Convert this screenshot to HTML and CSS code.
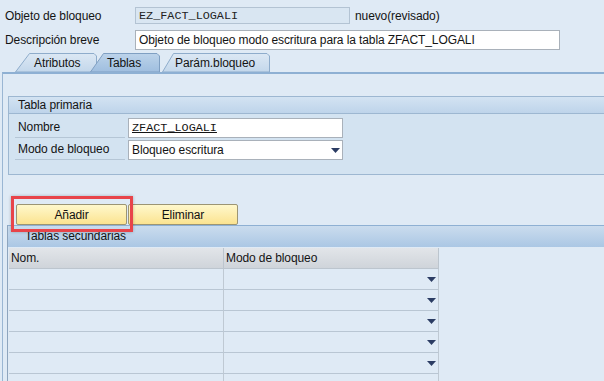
FILE: index.html
```html
<!DOCTYPE html>
<html lang="es">
<head>
  <meta charset="UTF-8">
  <title>Objeto de bloqueo EZ_FACT_LOGALI</title>
  <link rel="stylesheet" href="styles.css">
</head>
<body>
  <!-- cabecera -->
  <div class="header">
    <div class="frow r1">
      <span class="flabel">Objeto de bloqueo</span>
      <span class="field ro mono">EZ_FACT_LOGALI</span>
      <span class="state">nuevo(revisado)</span>
    </div>
    <div class="frow r2">
      <span class="flabel">Descripción breve</span>
      <span class="field desc">Objeto de bloqueo modo escritura para la tabla ZFACT_LOGALI</span>
    </div>
  </div>

  <!-- pestañas -->
  <div class="tabstrip">
    <div class="tab t-attr">
      <svg width="82" height="19"><defs><linearGradient id="gi" x1="0" y1="0" x2="0" y2="1"><stop offset="0" stop-color="#dce8f4"/><stop offset="1" stop-color="#c3d7eb"/></linearGradient></defs><polygon points="0.5,19 14.5,0.5 79,0.5 81.5,3 81.5,19" fill="url(#gi)" stroke="#8eaccb"/></svg>
      <span>Atributos</span>
    </div>
    <div class="tab t-tab active">
      <svg width="70" height="19"><defs><linearGradient id="ga" x1="0" y1="0" x2="0" y2="1"><stop offset="0" stop-color="#bcd3ea"/><stop offset="1" stop-color="#9fbedf"/></linearGradient></defs><polygon points="0.5,19 13.5,0.5 67,0.5 69.5,3 69.5,19" fill="url(#ga)" stroke="#7f9fc2"/></svg>
      <span>Tablas</span>
    </div>
    <div class="tab t-par">
      <svg width="108" height="19"><polygon points="0.5,19 11.5,0.5 105,0.5 107.5,3 107.5,19" fill="url(#gi)" stroke="#8eaccb"/></svg>
      <span>Parám.bloqueo</span>
    </div>
  </div>

  <div class="panel">
    <div class="group">
      <div class="group-title">Tabla primaria</div>
      <div class="group-body">
        <div class="grow">
          <span class="glabel">Nombre</span>
          <span class="field gfield mono"><u>ZFACT_LOGALI</u></span>
        </div>
        <div class="grow">
          <span class="glabel">Modo de bloqueo</span>
          <span class="field gfield select">Bloqueo escritura
            <svg class="arrow" width="9" height="5"><polygon points="0,0 9,0 4.5,5" fill="#2b3c63"/></svg>
          </span>
        </div>
      </div>
    </div>

    <div class="btnrow">
      <button class="btn b-add">Añadir</button>
      <button class="btn b-del">Eliminar</button>
      <div class="mark"></div>
    </div>

    <div class="tbl">
      <div class="tbl-title">Tablas secundarias</div>
      <div class="tbl-grid">
        <div class="th">Nom.</div><div class="th">Modo de bloqueo</div>
        <div class="td"></div><div class="td dd"><svg width="9" height="5"><polygon points="0,0 9,0 4.5,5" fill="#2b3c63"/></svg></div>
        <div class="td"></div><div class="td dd"><svg width="9" height="5"><polygon points="0,0 9,0 4.5,5" fill="#2b3c63"/></svg></div>
        <div class="td"></div><div class="td dd"><svg width="9" height="5"><polygon points="0,0 9,0 4.5,5" fill="#2b3c63"/></svg></div>
        <div class="td"></div><div class="td dd"><svg width="9" height="5"><polygon points="0,0 9,0 4.5,5" fill="#2b3c63"/></svg></div>
        <div class="td"></div><div class="td dd"><svg width="9" height="5"><polygon points="0,0 9,0 4.5,5" fill="#2b3c63"/></svg></div>
        <div class="td"></div><div class="td dd"></div>
      </div>
    </div>
  </div>
</body>
</html>
```

FILE: styles.css
```css
* {margin:0; padding:0; box-sizing:border-box;}
html, body {
  width:100%; height:100%; overflow:hidden;
  background:#dfeaf5;
  font-family:"Liberation Sans", Arial, sans-serif;
  font-size:12px; letter-spacing:-0.1px; color:#141414;
}
.mono {font-family:"Liberation Mono", "Courier New", monospace; font-size:11.8px; letter-spacing:0;}

/* cabecera */
.header {padding:7px 0 0 5px;}
.frow {display:flex; align-items:center;}
.r1 {height:17px;}
.r2 {height:20px; margin-top:6px;}
.flabel {width:130px;}
.field {
  display:flex; align-items:center; height:100%;
  background:#fff; border:1px solid #a9b1ba; padding-left:3px;
}
.ro {width:215px; background:#d9e6f2; border-color:#b3c3d3; color:#222;}
.state {margin-left:5px;}
.desc {width:425px;}

/* pestañas */
.tabstrip {display:flex; height:19px; margin-top:3px; padding-left:15px;}
.tab {position:relative; height:19px; display:flex; align-items:center;}
.tab svg {position:absolute; left:0; top:0;}
.tab span {position:relative;}
.t-attr {width:82px; padding-left:19px;}
.t-tab {width:70px; padding-left:17px; margin-left:-7px;}
.t-par {width:108px; padding-left:13px; margin-left:2px;}

/* panel */
.panel {
  margin-left:2px; height:400px;
  border-left:1px solid #9ab6d3; border-top:2px solid #8eb0d3;
  padding:22px 0 0 5px; overflow:hidden;
}
.group {border:1px solid #9db7d1; border-right:none; margin-right:-20px;}
.group-title {
  height:17px; line-height:16px; padding-left:9px;
  background:linear-gradient(#d3e3f2, #bed4ea); border-bottom:1px solid #9db7d1;
}
.group-body {background:#d3e3f1; padding:4px 0 14px 6px; display:flex; flex-direction:column; gap:2px;}
.grow {display:flex; align-items:center; height:20px;}
.glabel {width:110px; height:20px; line-height:19px; padding-left:3px; border-bottom:1px solid #b5c6d6; margin-right:3px;}
.gfield {width:215px; height:20px;}
.select {justify-content:space-between; padding-right:2px;}
.select .arrow {margin-top:1px;}

/* botones */
.btnrow {position:relative; display:flex; gap:1px; margin:29px 0 0 8px;}
.btn {
  height:21px; font:inherit; letter-spacing:inherit; color:#111;
  background:linear-gradient(#fff8cc, #fbe390);
  border:1px solid #9c9574; border-radius:2px;
}
.b-add {width:111px;}
.b-del {width:110px;}
.mark {
  position:absolute; left:-5px; top:-8px; width:122px; height:36px;
  border:3px solid #e8444a; box-shadow:0 0 3px rgba(0,0,0,0.25);
}

/* tabla secundaria */
.tbl {margin-left:-1px; border-left:1px solid #8ea5be;}
.tbl-title {
  height:22px; line-height:21px; padding-left:17px;
  border-top:1px solid #8eb0d3;
  background:linear-gradient(#cadcee, #abc7e4);
}
.tbl-grid {display:grid; grid-template-columns:215px 215px; margin:1px 0 0 1px;}
.th {
  height:21px; line-height:20px; padding-left:2px;
  background:linear-gradient(#e2e5e9, #cfd4da);
  border-right:1px solid #bcc5ce; border-bottom:1px solid #bcc5ce;
}
.td {height:21px; border-right:1px solid #bfc9d3; border-bottom:1px solid #b9c6d3;}
.dd {display:flex; align-items:center; justify-content:flex-end; padding-right:2px;}
```
